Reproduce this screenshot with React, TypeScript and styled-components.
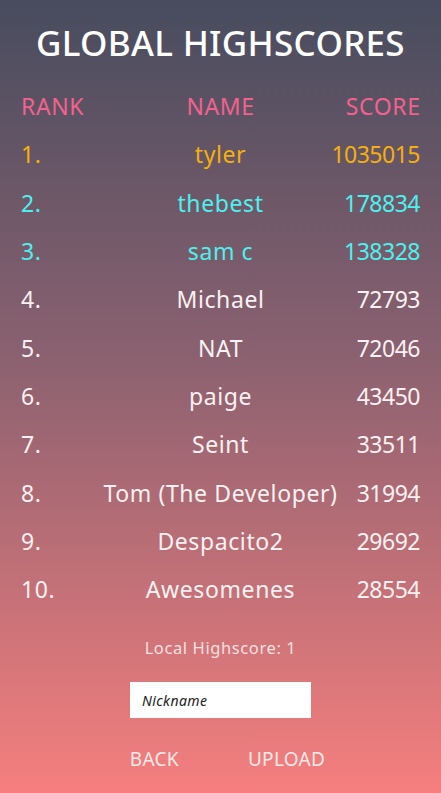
import React from "react";
import styled, { createGlobalStyle } from "styled-components";

const Global = createGlobalStyle`
  html, body { margin: 0; padding: 0; height: 100%; }
  body { font-family: "Noto Sans", "Open Sans", sans-serif; }
`;

const Screen = styled.div`
  width: 441px;
  height: 793px;
  box-sizing: border-box;
  background: linear-gradient(180deg, #474c5e 0%, #8b6170 45%, #f67f7e 100%);
  display: flex;
  flex-direction: column;
  align-items: center;
  padding-top: 18px;
  overflow: hidden;
`;

const Title = styled.h1`
  margin: 0;
  font-size: 35px;
  font-weight: 500;
  color: #ffffff;
  line-height: 50px;
  letter-spacing: 0.3px;
`;

const Table = styled.div`
  width: 100%;
  box-sizing: border-box;
  padding: 0 21px 0 21px;
  margin-top: 14px;
  display: flex;
  flex-direction: column;
`;

const Row = styled.div<{ $color: string }>`
  display: grid;
  grid-template-columns: 100px minmax(0, 1fr) 100px;
  height: 48.3px;
  align-items: center;
  font-size: 23px;
  letter-spacing: 0.6px;
  color: ${(p) => p.$color};
`;

const Rank = styled.span`
  text-align: left;
  white-space: nowrap;
`;
const Name = styled.span`
  display: flex;
  justify-content: center;
  white-space: nowrap;
`;
const Score = styled.span<{ $num?: boolean }>`
  text-align: right;
  white-space: nowrap;
  letter-spacing: ${(p) => (p.$num ? "-0.5px" : "0.6px")};
  margin-right: ${(p) => (p.$num ? "0" : "-0.6px")};
`;

const Local = styled.div`
  margin-top: 24px;
  font-size: 16.5px;
  letter-spacing: 0.6px;
  color: rgba(255, 240, 240, 0.88);
  line-height: 22px;
`;

const Input = styled.input`
  margin-top: 23px;
  width: 181px;
  height: 36px;
  box-sizing: border-box;
  border: none;
  outline: none;
  background: #ffffff;
  padding: 0 12px;
  font-family: "Noto Sans", sans-serif;
  font-style: italic;
  font-size: 14px;
  letter-spacing: 0.4px;
  color: #222;
  &::placeholder { color: #222; }
`;

const Buttons = styled.div`
  margin-top: 28px;
  display: flex;
  gap: 69px;
  margin-left: 14px;
`;

const Button = styled.button`
  background: none;
  border: none;
  padding: 0;
  font-family: "Noto Sans", sans-serif;
  font-size: 19px;
  letter-spacing: 0.3px;
  color: rgba(255, 245, 245, 0.92);
  line-height: 26px;
  cursor: pointer;
`;

const GOLD = "#f4b00e";
const CYAN = "#4ef0ee";
const WHITE = "#fbf1f2";
const PINK = "#f2628e";

const rows = [
  ["1.", "tyler", "1035015", GOLD],
  ["2.", "thebest", "178834", CYAN],
  ["3.", "sam c", "138328", CYAN],
  ["4.", "Michael", "72793", WHITE],
  ["5.", "NAT", "72046", WHITE],
  ["6.", "paige", "43450", WHITE],
  ["7.", "Seint", "33511", WHITE],
  ["8.", "Tom (The Developer)", "31994", WHITE],
  ["9.", "Despacito2", "29692", WHITE],
  ["10.", "Awesomenes", "28554", WHITE],
];

export default function App() {
  return (
    <Screen>
      <Global />
      <Title>GLOBAL HIGHSCORES</Title>
      <Table>
        <Row $color={PINK}>
          <Rank>RANK</Rank>
          <Name>NAME</Name>
          <Score>SCORE</Score>
        </Row>
        {rows.map(([r, n, s, c]) => (
          <Row key={r} $color={c}>
            <Rank>{r}</Rank>
            <Name>{n}</Name>
            <Score $num>{s}</Score>
          </Row>
        ))}
      </Table>
      <Local>Local Highscore: 1</Local>
      <Input placeholder="Nickname" />
      <Buttons>
        <Button>BACK</Button>
        <Button>UPLOAD</Button>
      </Buttons>
    </Screen>
  );
}
